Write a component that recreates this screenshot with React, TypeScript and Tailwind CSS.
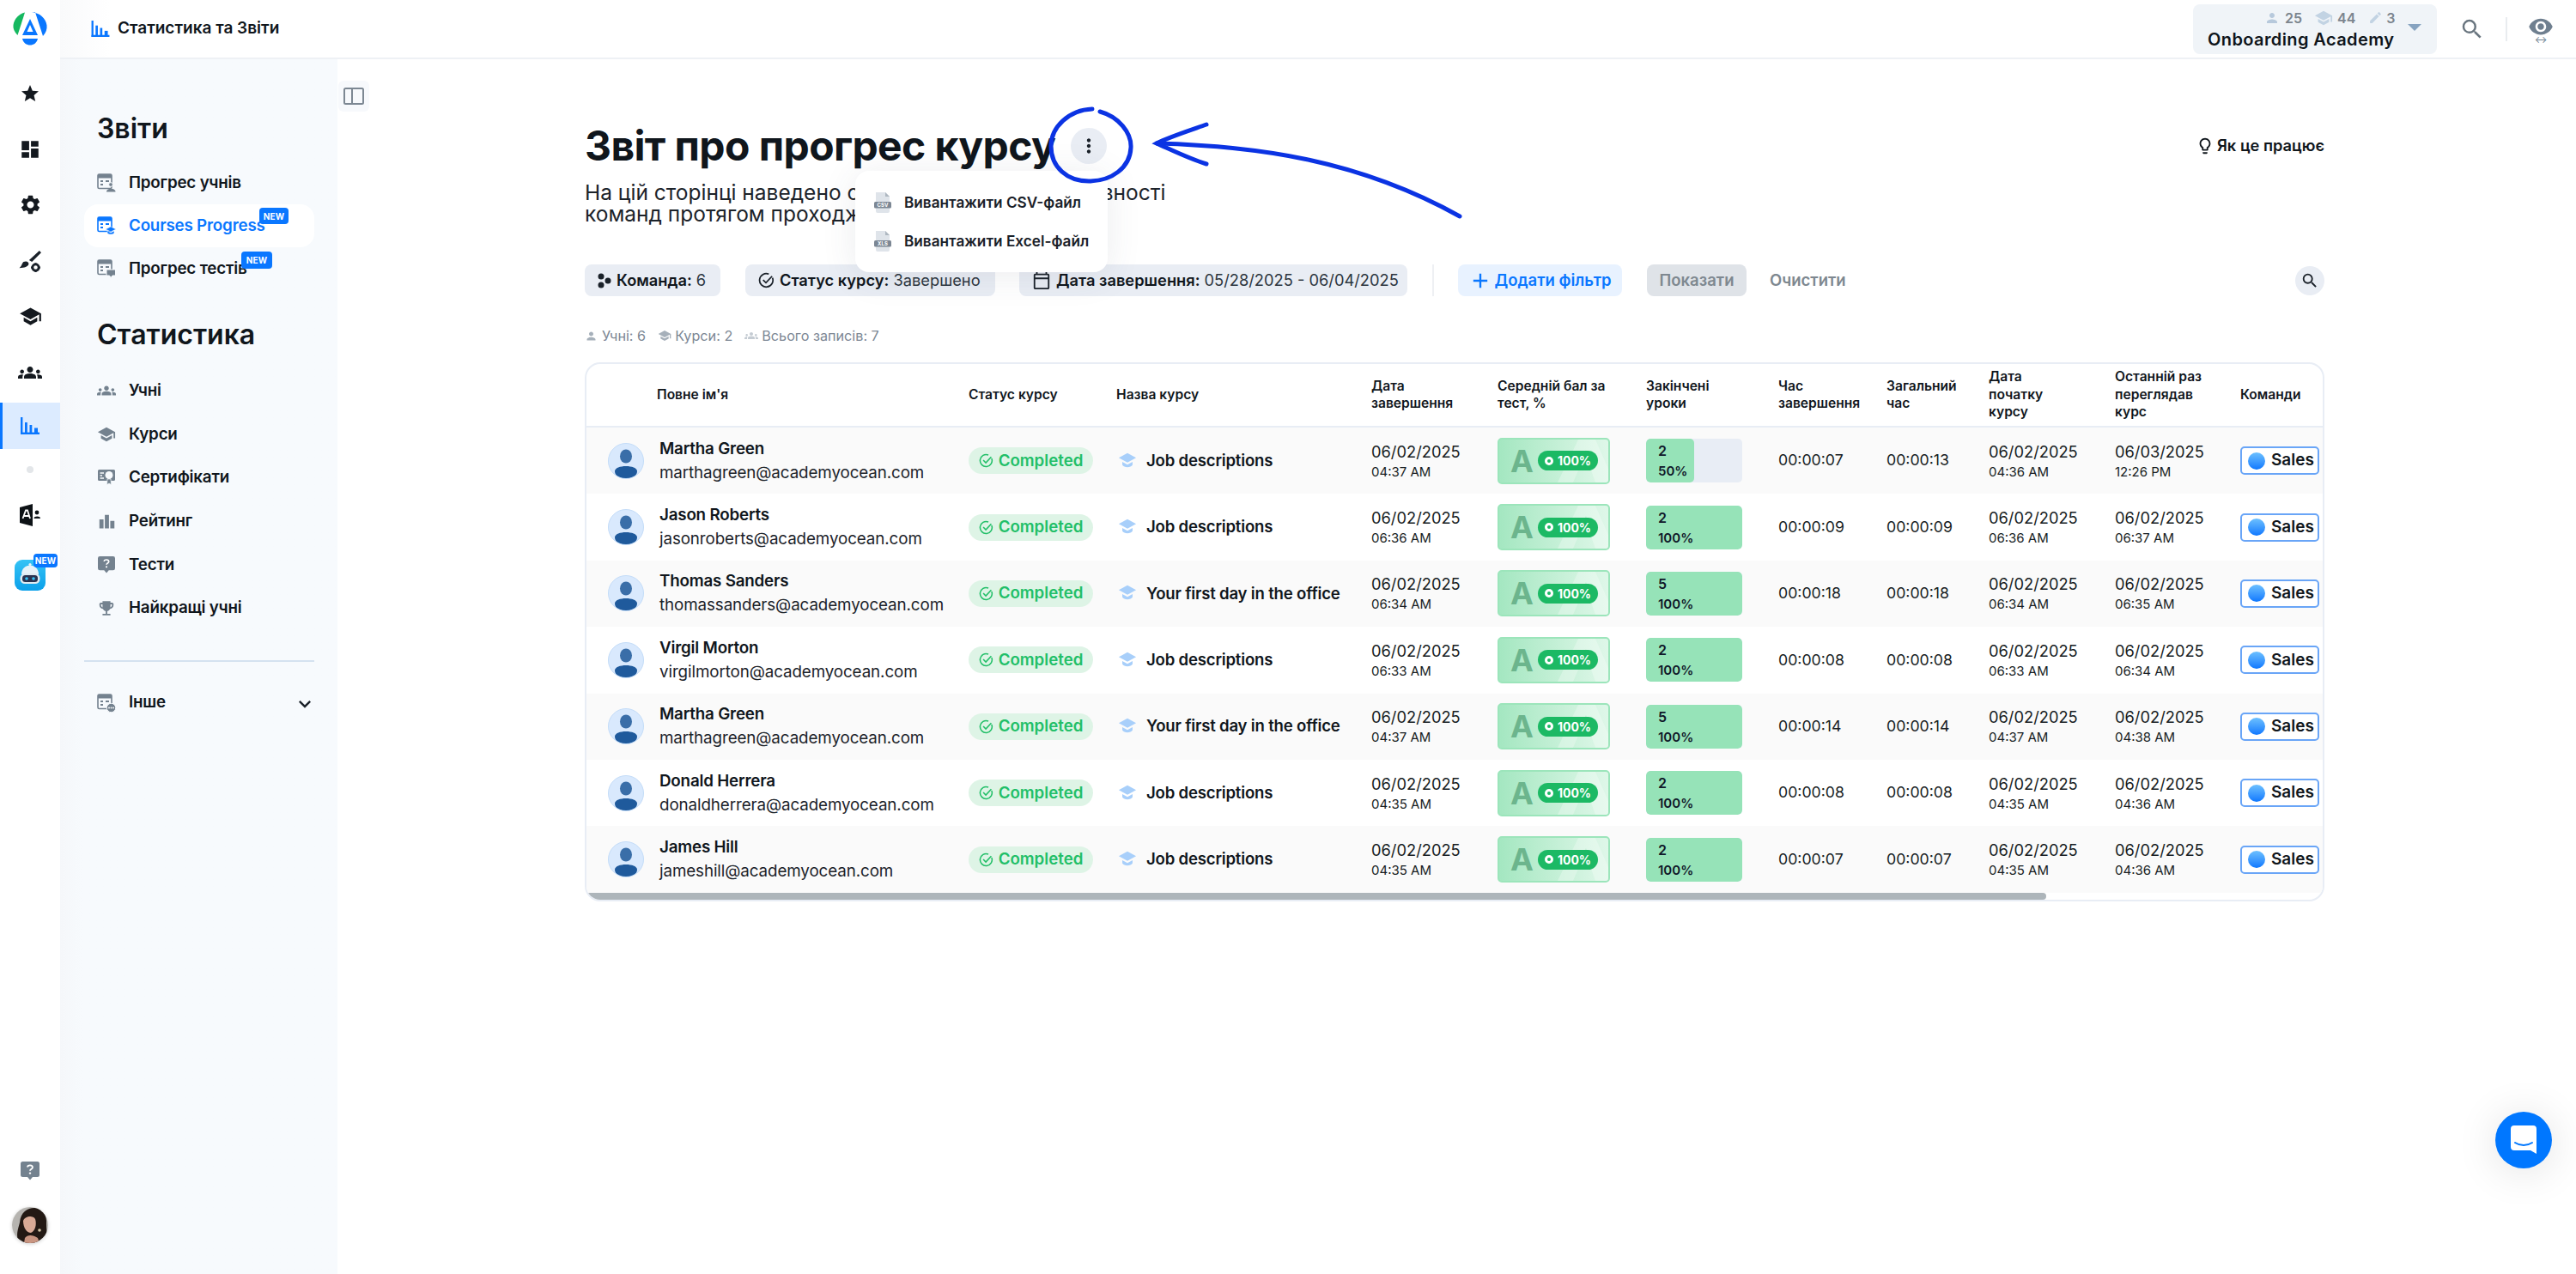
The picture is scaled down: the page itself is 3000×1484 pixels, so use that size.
import React from "react";
import { MdStar, MdDashboard, MdSettings, MdGroups, MdSchool, MdSearch, MdOutlineLightbulb, MdMoreVert, MdKeyboardArrowDown, MdOutlineCalendarToday, MdPerson, MdEdit, MdAdd, MdVisibility, MdEmojiEvents, MdLeaderboard } from "react-icons/md";

function ChartIcon({ className }: { className?: string }) {
  return (
    <svg viewBox="0 0 22 20" className={className} fill="currentColor">
      <rect x="0" y="0" width="2.4" height="20" />
      <rect x="0" y="17.6" width="22" height="2.4" />
      <rect x="5" y="6" width="2.8" height="12" />
      <rect x="10.5" y="9" width="2.8" height="9" />
      <rect x="16" y="12.5" width="4" height="6" />
    </svg>
  );
}

function Logo() {
  return (
    <svg viewBox="0 0 40 40" className="w-[40px] h-[40px]">
      <path d="M14 0.5 L5.5 27 C1.5 23 0 19 0.5 15 C1.5 8 7 2 14 0.5Z" fill="#16b860" />
      <path d="M22 0.2 C31 0.8 38.5 7 39.5 15.5 C40 20 38.5 24 35 28 L26 0.2Z" fill="#0a77ff" />
      <path d="M20 8 L29 27 L11 27Z M20 15 L16.5 23 L23.5 23Z" fill="#0a77ff" fillRule="evenodd" />
      <path d="M11 31 L29 31 C28 36 24 38.5 20 38.5 C16 38.5 12 36 11 31Z" fill="#0a77ff" />
    </svg>
  );
}

function BrushIcon() {
  return (
    <svg viewBox="0 0 24 24" className="w-[26px] h-[26px]" fill="#1a2129">
      <path d="M22 1 L24 3 L14 13 C13 12 12 11.500 11 11Z" />
      <path d="M5 13 C8 11.500 11 13 10.500 15.500 C10 18 6 19.500 0.500 19.500 C3 18 3 15 5 13Z" />
      <circle cx="18" cy="19" r="3.4" fill="none" stroke="#1a2129" strokeWidth="2.6" />
      <path d="M18 14 v2 M18 22 v2 M13 19 h2 M21 19 h2" stroke="#1a2129" strokeWidth="2" />
    </svg>
  );
}

function AcademyPeople() {
  return (
    <svg viewBox="0 0 24 26" className="w-[24px] h-[26px]">
      <path d="M0 4 L15 0 L15 26 L0 22Z" fill="#0d1216" />
      <path d="M3.500 17 L7 7.500 L9 7.500 L12 17 M5 14 L10.500 14" stroke="#fff" strokeWidth="1.800" fill="none" />
      <circle cx="20" cy="10" r="2.400" fill="#0d1216" />
      <path d="M16.500 17 C16.500 13.800 24 13.800 24 17Z" fill="#0d1216" />
    </svg>
  );
}

function BotIcon() {
  return (
    <svg viewBox="0 0 36 36" className="w-[36px] h-[36px]">
      <defs>
        <linearGradient id="botbg" x1="0" y1="0" x2="0" y2="1">
          <stop offset="0" stopColor="#35c3f5" />
          <stop offset="1" stopColor="#0ba0ea" />
        </linearGradient>
      </defs>
      <rect width="36" height="36" rx="9" fill="url(#botbg)" />
      <path d="M8 17 C8 10 13 6.500 18 6.500 C23 6.500 28 10 28 17Z" fill="#e6f2f8" />
      <circle cx="18" cy="5.500" r="1.600" fill="#e6f2f8" />
      <rect x="6.500" y="16" width="23" height="12" rx="5.500" fill="#dfeaf0" />
      <rect x="9" y="18" width="18" height="8" rx="3.500" fill="#2a3350" />
      <circle cx="14" cy="22" r="1.800" fill="#35c3f5" />
      <circle cx="22" cy="22" r="1.800" fill="#35c3f5" />
    </svg>
  );
}

function QuizIcon({ className }: { className?: string }) {
  return (
    <svg viewBox="0 0 22 22" className={className}>
      <path d="M2.500 0 H19.500 A2.500 2.500 0 0 1 22 2.500 V15.500 A2.500 2.500 0 0 1 19.500 18 H14 L11 21.500 L8 18 H2.500 A2.500 2.500 0 0 1 0 15.500 V2.500 A2.500 2.500 0 0 1 2.500 0Z" fill="#74828f" />
      <path d="M8 6.500 C8 3.600 14 3.600 14 6.800 C14 8.800 11 8.800 11 10.800" stroke="#fff" strokeWidth="1.800" fill="none" />
      <circle cx="11" cy="13.600" r="1.200" fill="#fff" />
    </svg>
  );
}

function ReportIcon({ color, kind }: { color: string; kind: "person" | "cap" | "quiz" | "more" }) {
  return (
    <svg viewBox="0 0 22 22" className="w-[22px] h-[22px]" fill="none">
      <rect x="1" y="1" width="16" height="16.500" rx="1.500" stroke={color} strokeWidth="1.600" />
      <rect x="1" y="1" width="16" height="4.500" fill={color} />
      <path d="M4 9 H7 M4 13 H7 M10 9 H14" stroke={color} strokeWidth="1.800" />
      {kind === "person" && (
        <g fill={color}>
          <circle cx="16" cy="13" r="2.400" stroke="#f7fafd" />
          <path d="M11 21.500 C11 16.500 21.500 16.500 21.500 21.500Z" />
        </g>
      )}
      {kind === "cap" && <path d="M16 12 L22 15 L16 18 L10 15Z M12 17 V19.500 C14 21.500 18 21.500 20 19.500 V17 L16 19Z" fill={color} stroke="#fff" strokeWidth=".5" />}
      {kind === "quiz" && <path d="M11 12 H21.500 V19 H18 L16 21.500 L14.500 19 H11Z" fill={color} stroke="#f7fafd" />}
      {kind === "more" && (
        <g>
          <circle cx="16.500" cy="16.500" r="5.200" fill={color} stroke="#f7fafd" />
          <circle cx="14" cy="16.500" r=".9" fill="#fff" />
          <circle cx="16.500" cy="16.500" r=".9" fill="#fff" />
          <circle cx="19" cy="16.500" r=".9" fill="#fff" />
        </g>
      )}
    </svg>
  );
}

function CertIcon() {
  return (
    <svg viewBox="0 0 20 18" className="w-[20px] h-[18px]">
      <path d="M1.500 0 H18.500 A1.500 1.500 0 0 1 20 1.500 V11.500 A1.500 1.500 0 0 1 18.500 13 H1.500 A1.500 1.500 0 0 1 0 11.500 V1.500 A1.500 1.500 0 0 1 1.500 0Z" fill="#74828f" />
      <path d="M2.500 4 H7 M2.500 7 H5 M2.500 10 H7" stroke="#f7fafd" strokeWidth="1.300" />
      <circle cx="13" cy="6.500" r="4.500" fill="#f7fafd" />
      <path d="M11 11 L10.500 17.500 L13 16 L15.500 17.500 L15 11Z" fill="#74828f" stroke="#f7fafd" strokeWidth=".7" />
    </svg>
  );
}

function NewBadge({ className }: { className: string }) {
  return <span className={`absolute flex items-center justify-center rounded-[4px] bg-[#0a77ff] text-white font-bold tracking-[0.2px] text-[10px] leading-none ${className}`}>NEW</span>;
}

function Rail() {
  const row = "flex h-[65px] w-full items-center justify-center text-[#14191f]";
  return (
    <aside className="flex w-[70px] shrink-0 flex-col items-center bg-white">
      <div className="flex h-[69px] w-full items-center justify-center pb-[1px]">
        <Logo />
      </div>
      <div className="flex w-full flex-col pt-[7px]">
        <div className={row}><MdStar className="h-[24px] w-[24px]" /></div>
        <div className={row}><MdDashboard className="h-[26px] w-[26px]" /></div>
        <div className={row}><MdSettings className="h-[27px] w-[27px]" /></div>
        <div className={row}><BrushIcon /></div>
        <div className={row}><MdSchool className="h-[27px] w-[27px]" /></div>
        <div className={row}><MdGroups className="h-[28px] w-[28px]" /></div>
      </div>
      <div className="mt-[3px] flex h-[54px] w-full items-center justify-center border-l-[3px] border-[#0a77ff] bg-[#dcebff] pr-[3px] text-[#0a77ff]">
        <ChartIcon className="h-[20px] w-[22px]" />
      </div>
      <div className="mt-[20px] h-[8px] w-[8px] rounded-full bg-[#e3e6e9]" />
      <div className="mt-[36px]"><AcademyPeople /></div>
      <div className="relative mt-[39px]">
        <BotIcon />
        <NewBadge className="left-[22px] top-[-7px] h-[16px] w-[28px] text-[8px]" />
      </div>
      <div className="mt-auto flex flex-col items-center pb-[36px]">
        <QuizIcon className="h-[22px] w-[22px]" />
        <div className="mt-[31px] h-[42px] w-[42px] overflow-hidden rounded-full shadow-[0_1px_4px_rgba(0,0,0,0.2)]">
          <svg viewBox="0 0 42 42" className="h-full w-full">
            <rect width="42" height="42" fill="#b6b4b0" />
            <path d="M8 42 C4 32 7 26 9 18 C10 6 18 1 26 1 C36 1 41 10 40 20 C40 28 42 32 38 42Z" fill="#231914" />
            <path d="M13 16 C15 11 24 9 27 14 C29 20 27 28 22 30 C17 30 13 24 13 16Z" fill="#d9aa96" />
            <path d="M15 36 C18 32 24 32 30 36 L32 42 L14 42Z" fill="#c99581" />
            <circle cx="32" cy="27" r="1.800" fill="#d8c8a8" />
          </svg>
        </div>
      </div>
    </aside>
  );
}

function TopBar() {
  return (
    <header className="flex h-[69px] shrink-0 items-center border-b-2 border-[#eef1f5] bg-gradient-to-r from-[#f9fafb] to-white to-[2%] pl-[36px] pr-[26px]">
      <ChartIcon className="h-[19px] w-[22px] text-[#0a77ff]" />
      <span className="ml-[9px] text-[19px] font-semibold text-[#10161c]">Статистика та Звіти</span>
      <div className="ml-auto flex h-[58px] w-[284px] flex-col rounded-[8px] bg-[#f0f4f8] pl-[17px] pt-[5px]">
        <div className="flex h-[22px] items-center pl-[66px] text-[16px] font-semibold text-[#7c858e]">
          <MdPerson className="h-[18px] w-[18px] text-[#b7c9dc]" />
          <span className="ml-[6px]">25</span>
          <MdSchool className="ml-[14px] h-[22px] w-[22px] text-[#c2d3e3]" />
          <span className="ml-[5px]">44</span>
          <MdEdit className="ml-[15px] h-[17px] w-[17px] text-[#c2d3e3]" />
          <span className="ml-[4px]">3</span>
        </div>
        <div className="relative flex items-center">
          <span className="text-[20px] leading-[28px] font-semibold tracking-[0.4px] text-[#0f151b]">Onboarding Academy</span>
          <span className="absolute left-[233px] top-[-4px] h-0 w-0 border-x-[8px] border-t-[8px] border-x-transparent border-t-[#86a3c0]" />
        </div>
      </div>
      <MdSearch className="ml-[26px] h-[30px] w-[30px] text-[#69757f]" />
      <div className="ml-[24px] h-[28px] w-[2px] bg-[#e9ecef]" />
      <div className="ml-[24px] flex flex-col items-center text-[#6f7f8f]">
        <MdVisibility className="h-[30px] w-[30px]" />
        <span className="mt-[-5px] text-[11px] leading-[10px]">↔</span>
      </div>
    </header>
  );
}

function SideItem({ icon, label, active, badge, tall }: { icon: React.ReactNode; label: string; active?: boolean; badge?: string; tall?: boolean }) {
  return (
    <div className={`relative flex ${tall ? "h-[50.600px]" : "h-[50px]"} w-[268px] items-center rounded-[16px] pl-[15px] ${active ? "bg-white text-[#0a77ff]" : "text-[#10161c]"}`}>
      <span className="flex w-[22px] items-center justify-center">{icon}</span>
      <span className="ml-[15px] text-[18.800px] font-semibold tracking-[-0.2px]">{label}</span>
      {badge && <NewBadge className={badge} />}
    </div>
  );
}

function Sidebar() {
  const gray = "#74828f";
  return (
    <nav className="flex w-[323px] shrink-0 flex-col bg-gradient-to-r from-[#f5f7fa] to-[#f7fafd] to-[8%] pl-[28px] pt-[59px]">
      <h2 className="pl-[15px] text-[32px] leading-[44px] font-semibold text-[#10161c]">Звіти</h2>
      <div className="mt-[16px] flex flex-col">
        <SideItem icon={<ReportIcon color={gray} kind="person" />} label="Прогрес учнів" />
        <SideItem icon={<ReportIcon color="#0a77ff" kind="cap" />} label="Courses Progress" active badge="left-[204px] top-[4px] h-[19px] w-[34px]" />
        <SideItem icon={<ReportIcon color={gray} kind="quiz" />} label="Прогрес тестів" badge="left-[183px] top-[5px] h-[20px] w-[36px]" />
      </div>
      <h2 className="mt-[30px] pl-[15px] text-[32px] leading-[44px] font-semibold text-[#10161c]">Статистика</h2>
      <div className="mt-[18px] flex flex-col">
        <SideItem tall icon={<MdGroups color={gray} className="h-[24px] w-[24px]" />} label="Учні" />
        <SideItem tall icon={<MdSchool color={gray} className="h-[24px] w-[24px]" />} label="Курси" />
        <SideItem tall icon={<CertIcon />} label="Сертифікати" />
        <SideItem tall icon={<MdLeaderboard color={gray} className="h-[21px] w-[21px]" />} label="Рейтинг" />
        <SideItem tall icon={<QuizIcon className="h-[20px] w-[20px]" />} label="Тести" />
        <SideItem tall icon={<MdEmojiEvents color={gray} className="h-[23px] w-[23px]" />} label="Найкращі учні" />
      </div>
      <div className="mt-[35px] h-[2px] w-[268px] bg-[#d5e2f0]" />
      <div className="relative mt-[23px]">
        <SideItem icon={<ReportIcon color={gray} kind="more" />} label="Інше" />
        <MdKeyboardArrowDown className="absolute left-[243px] top-[12px] h-[28px] w-[28px] text-[#1a2129]" />
      </div>
    </nav>
  );
}

function FileIcon({ label }: { label: string }) {
  return (
    <svg viewBox="0 0 20 24" className="h-[24px] w-[20px]">
      <path d="M2 0 H13 L18 5 V22 A2 2 0 0 1 16 24 H4 A2 2 0 0 1 2 22Z" fill="#dfe4ea" />
      <path d="M13 0 L18 5 H13Z" fill="#aeb7c0" />
      <rect x="0" y="11" width="20" height="7.500" rx="1.500" fill="#7c8794" />
      <text x="10" y="17" textAnchor="middle" fontSize="6" fontWeight="700" fill="#fff">{label}</text>
    </svg>
  );
}

function Chip({ icon, label, value, w }: { icon: React.ReactNode; label: string; value: string; w: string }) {
  return (
    <div className={`flex h-[37px] ${w} items-center rounded-[8px] bg-[#e9edf4] pl-[15px] text-[18.300px] whitespace-nowrap text-[#2d3640]`}>
      {icon}
      <span className="ml-[6px] font-semibold text-[#10161c]">{label}</span>
      <span className="ml-[5px]">{value}</span>
    </div>
  );
}

type R = { name: string; email: string; course: string; end: [string, string]; lessons: string; pct: number; time: string; total: string; start: [string, string]; last: [string, string] };

const rows: R[] = [
  { name: "Martha Green", email: "marthagreen@academyocean.com", course: "Job descriptions", end: ["06/02/2025", "04:37 AM"], lessons: "2", pct: 50, time: "00:00:07", total: "00:00:13", start: ["06/02/2025", "04:36 AM"], last: ["06/03/2025", "12:26 PM"] },
  { name: "Jason Roberts", email: "jasonroberts@academyocean.com", course: "Job descriptions", end: ["06/02/2025", "06:36 AM"], lessons: "2", pct: 100, time: "00:00:09", total: "00:00:09", start: ["06/02/2025", "06:36 AM"], last: ["06/02/2025", "06:37 AM"] },
  { name: "Thomas Sanders", email: "thomassanders@academyocean.com", course: "Your first day in the office", end: ["06/02/2025", "06:34 AM"], lessons: "5", pct: 100, time: "00:00:18", total: "00:00:18", start: ["06/02/2025", "06:34 AM"], last: ["06/02/2025", "06:35 AM"] },
  { name: "Virgil Morton", email: "virgilmorton@academyocean.com", course: "Job descriptions", end: ["06/02/2025", "06:33 AM"], lessons: "2", pct: 100, time: "00:00:08", total: "00:00:08", start: ["06/02/2025", "06:33 AM"], last: ["06/02/2025", "06:34 AM"] },
  { name: "Martha Green", email: "marthagreen@academyocean.com", course: "Your first day in the office", end: ["06/02/2025", "04:37 AM"], lessons: "5", pct: 100, time: "00:00:14", total: "00:00:14", start: ["06/02/2025", "04:37 AM"], last: ["06/02/2025", "04:38 AM"] },
  { name: "Donald Herrera", email: "donaldherrera@academyocean.com", course: "Job descriptions", end: ["06/02/2025", "04:35 AM"], lessons: "2", pct: 100, time: "00:00:08", total: "00:00:08", start: ["06/02/2025", "04:35 AM"], last: ["06/02/2025", "04:36 AM"] },
  { name: "James Hill", email: "jameshill@academyocean.com", course: "Job descriptions", end: ["06/02/2025", "04:35 AM"], lessons: "2", pct: 100, time: "00:00:07", total: "00:00:07", start: ["06/02/2025", "04:35 AM"], last: ["06/02/2025", "04:36 AM"] },
];

const gridCols = "grid grid-cols-[445px_172px_297px_147px_173px_154px_126px_119px_147px_146px_95px]";

function DateCell({ d }: { d: [string, string] }) {
  return (
    <div className="flex flex-col text-[#171d23]">
      <span className="text-[18.300px] leading-[26px]">{d[0]}</span>
      <span className="text-[15px] leading-[22px]">{d[1]}</span>
    </div>
  );
}

function Avatar() {
  return (
    <svg viewBox="0 0 42 42" className="h-[42px] w-[42px]">
      <defs>
        <clipPath id="avclip"><circle cx="21" cy="21" r="20" /></clipPath>
      </defs>
      <circle cx="21" cy="21" r="20.500" fill="#d9e9fd" stroke="#c3dcf8" />
      <g clipPath="url(#avclip)">
        <ellipse cx="21" cy="15.500" rx="7" ry="8" fill="#3a6ea8" />
        <path d="M8 33 C8 25 34 25 34 33 C34 38 28 42 21 42 C14 42 8 38 8 33Z" fill="#1f5a9c" />
      </g>
    </svg>
  );
}

function ScoreBadge() {
  return (
    <div className="relative flex h-[54px] w-[131px] items-center overflow-hidden rounded-[5px] border-2 border-[#9ce5bb] bg-gradient-to-r from-[#a4e7c1] to-[#dff7e9]">
      <svg viewBox="0 0 127 50" className="absolute inset-0 h-full w-full">
        <path d="M68 50 L92 0 H112 L127 34 V50 H112 L107 36 H92 L86 50Z" fill="#fff" fillOpacity="0.28" />
        <path d="M95 27 L101 12 L106 27Z" fill="#a4e7c1" fillOpacity="0.6" />
      </svg>
      <span className="relative ml-[13px] w-[32px] text-[36px] leading-none font-bold text-[#6cb58d]">A</span>
      <div className="relative flex h-[23px] w-[70px] items-center justify-center rounded-full bg-[#1cb964] text-[14px] font-bold text-white">
        <span className="mr-[5px] h-[10px] w-[10px] rounded-full border-[3px] border-white" />
        100%
      </div>
    </div>
  );
}

function Lessons({ n, pct }: { n: string; pct: number }) {
  return (
    <div className="relative h-[51px] w-[112px] overflow-hidden rounded-[5px] bg-[#e8edf5]">
      <div className="absolute inset-y-0 left-0 rounded-[5px] bg-[#96e3b8]" style={{ width: `${pct}%` }} />
      <div className="relative flex flex-col pl-[14px] pt-[2px] font-semibold text-[#10182a]">
        <span className="text-[16px] leading-[24px]">{n}</span>
        <span className="text-[15px] leading-[24px]">{pct}%</span>
      </div>
    </div>
  );
}

function Row({ r, i }: { r: R; i: number }) {
  return (
    <div className={`${gridCols} h-[77.400px] items-center ${i % 2 === 0 ? "bg-[#fafafa]" : "bg-white"}`}>
      <div className="flex items-center pl-[25px]">
        <Avatar />
        <div className="ml-[18px] flex flex-col">
          <span className="text-[18.800px] leading-[28px] font-semibold tracking-[-0.2px] text-[#10161c]">{r.name}</span>
          <span className="text-[18.800px] leading-[28px] tracking-[-0.1px] text-[#1c232a]">{r.email}</span>
        </div>
      </div>
      <div>
        <div className="flex h-[31px] w-[145px] items-center justify-center rounded-full bg-[#def4e6] text-[18.700px] font-semibold text-[#22bf68]">
          <svg viewBox="0 0 20 20" className="mr-[6px] h-[17px] w-[17px]" fill="none" stroke="#22bf68" strokeWidth="1.800">
            <path d="M17.500 7 A8.200 8.200 0 1 1 13 2.400" />
            <path d="M6 9.500 L9.500 13 L17 5" />
          </svg>
          Completed
        </div>
      </div>
      <div className="flex items-center">
        <svg viewBox="0 0 24 24" className="ml-[2px] h-[22px] w-[22px]" fill="#a8cffa">
          <path d="M12 2 L23 8 L12 14 L1 8Z" />
          <path d="M5.500 13 V17 C8 21 16 21 18.500 17 V13 L12 16.500Z" />
        </svg>
        <span className="ml-[11px] text-[18.600px] font-semibold tracking-[-0.2px] whitespace-nowrap text-[#10161c]">{r.course}</span>
      </div>
      <DateCell d={r.end} />
      <ScoreBadge />
      <Lessons n={r.lessons} pct={r.pct} />
      <span className="text-[17.700px] text-[#171d23]">{r.time}</span>
      <span className="text-[17.700px] text-[#171d23]">{r.total}</span>
      <DateCell d={r.start} />
      <DateCell d={r.last} />
      <div className="flex h-[33px] w-[92px] items-center rounded-[5px] border-2 border-[#69a5f7] bg-white pl-[7px] text-[19px] font-semibold text-[#10161c]">
        <span className="h-[20px] w-[20px] rounded-full bg-gradient-to-b from-[#6cc0ff] to-[#0a77ff]" />
        <span className="ml-[7px]">Sales</span>
      </div>
    </div>
  );
}

function Table() {
  const th = "text-[15.600px] leading-[20.500px] font-semibold text-[#10161c]";
  return (
    <div className="mt-[21px] h-[628px] w-[2026px] overflow-hidden rounded-[18px] border-2 border-[#e8edf5] bg-white">
      <div className={`${gridCols} h-[74px] items-center border-b-2 border-[#e8edf5]`}>
        <span className={`${th} pl-[82px]`}>Повне ім'я</span>
        <span className={th}>Статус курсу</span>
        <span className={th}>Назва курсу</span>
        <span className={th}>Дата<br />завершення</span>
        <span className={th}>Середній бал за<br />тест, %</span>
        <span className={th}>Закінчені<br />уроки</span>
        <span className={th}>Час<br />завершення</span>
        <span className={th}>Загальний<br />час</span>
        <span className={th}>Дата<br />початку<br />курсу</span>
        <span className={th}>Останній раз<br />переглядав<br />курс</span>
        <span className={th}>Команди</span>
      </div>
      {rows.map((r, i) => <Row key={i} r={r} i={i} />)}
      <div className="h-[8px] w-[1700px] rounded-full bg-[#adb5ba]" />
    </div>
  );
}

function TeamIcon() {
  return (
    <svg viewBox="0 0 16 18" className="h-[18px] w-[16px]" fill="#1a2129">
      <circle cx="4" cy="4" r="3.500" />
      <circle cx="4" cy="14" r="3.500" />
      <circle cx="12" cy="9" r="3.500" />
    </svg>
  );
}

function Main() {
  return (
    <main className="flex flex-1 bg-white">
      <div className="w-[288px] shrink-0 pl-[1px] pt-[25px]">
        <div className="flex h-[36px] w-[36px] items-center justify-center rounded-[6px] bg-[#f7f9fc]">
          <svg viewBox="0 0 24 20" className="h-[20px] w-[24px]" fill="none" stroke="#7d8893" strokeWidth="2">
            <rect x="1" y="1" width="22" height="18" rx="1.500" />
            <path d="M10 1 V19" />
          </svg>
        </div>
      </div>
      <div className="w-[2026px] pt-[73px]">
        <div className="relative flex h-[56px] items-center">
          <h1 className="text-[48px] leading-[56px] font-bold tracking-[-0.6px] whitespace-nowrap text-[#10161c]">Звіт про прогрес курсу</h1>
          <div className="absolute left-[566px] top-[7px] flex h-[42px] w-[42px] items-center justify-center rounded-full bg-[#e9edf4] text-[#1a2129]">
            <MdMoreVert className="h-[26px] w-[26px]" />
          </div>
          <div className="absolute left-[315px] top-[57px] z-10 flex h-[118px] w-[294px] flex-col justify-center gap-[21px] rounded-[16px] bg-white pl-[22px] shadow-[0_4px_40px_rgba(60,70,90,0.10)]">
            <div className="flex h-[24px] items-center gap-[15px] text-[17.200px] font-semibold text-[#1a2129]"><FileIcon label="CSV" />Вивантажити CSV-файл</div>
            <div className="flex h-[24px] items-center gap-[15px] text-[17.200px] font-semibold text-[#1a2129]"><FileIcon label="XLS" />Вивантажити Excel-файл</div>
          </div>
          <div className="ml-auto flex items-center text-[18.300px] font-semibold text-[#10161c]">
            <MdOutlineLightbulb className="mr-[3px] h-[22px] w-[22px]" />
            Як це працює
          </div>
        </div>
        <p className="mt-[14px] text-[24.500px] leading-[25px] text-[#1c232a]">
          На цій сторінці наведено огляд успішності та активності<br />команд протягом проходження курсу
        </p>
        <div className="mt-[46px] flex h-[37px] items-center">
          <Chip w="w-[158px]" icon={<TeamIcon />} label="Команда:" value="6" />
          <div className="ml-[29px]">
            <Chip w="w-[291px]" icon={<svg viewBox="0 0 20 20" className="h-[19px] w-[19px]" fill="none" stroke="#1a2129" strokeWidth="1.800"><path d="M17.500 7 A8.200 8.200 0 1 1 13 2.400" /><path d="M6 9.500 L9.500 13 L17 5" /></svg>} label="Статус курсу:" value="Завершено" />
          </div>
          <div className="ml-[28px]">
            <Chip w="w-[452px]" icon={<MdOutlineCalendarToday className="h-[22px] w-[22px] text-[#1a2129]" />} label="Дата завершення:" value="05/28/2025 - 06/04/2025" />
          </div>
          <div className="ml-[29px] h-[37px] w-[2px] bg-[#eef0f3]" />
          <div className="ml-[28px] flex h-[37px] w-[191px] items-center justify-center rounded-[8px] bg-[#e8f2ff] text-[18.500px] font-semibold text-[#0a77ff]">
            <MdAdd className="mr-[2px] h-[28px] w-[28px]" />
            Додати фільтр
          </div>
          <div className="ml-[29px] flex h-[37px] w-[116px] items-center justify-center rounded-[8px] bg-[#dfe3e8] text-[18.500px] font-semibold text-[#7e8890]">Показати</div>
          <div className="ml-[27px] text-[18.500px] font-semibold text-[#7e8890]">Очистити</div>
          <div className="ml-auto flex h-[34px] w-[34px] items-center justify-center rounded-full bg-[#e9edf4] text-[#1a2129]">
            <MdSearch className="h-[22px] w-[22px]" />
          </div>
        </div>
        <div className="mt-[36px] flex h-[20px] items-center text-[16.200px] text-[#7c8794]">
          <MdPerson className="h-[15px] w-[15px] text-[#a6b0ba]" />
          <span className="ml-[5px]">Учні: 6</span>
          <MdSchool className="ml-[14px] h-[16px] w-[16px] text-[#a6b0ba]" />
          <span className="ml-[4px]">Курси: 2</span>
          <MdGroups className="ml-[14px] h-[16px] w-[16px] text-[#c5ccd3]" />
          <span className="ml-[4px]">Всього записів: 7</span>
        </div>
        <Table />
      </div>
    </main>
  );
}

export default function App() {
  return (
    <div className="relative flex h-[1484px] w-[3000px] overflow-hidden bg-white [font-family:Inter,sans-serif]">
      <Rail />
      <div className="flex flex-1 flex-col">
        <TopBar />
        <div className="flex flex-1">
          <Sidebar />
          <Main />
        </div>
      </div>
      <svg viewBox="0 0 3000 1484" className="pointer-events-none absolute inset-0 z-20 h-full w-full" fill="none" stroke="#0b33e3" strokeWidth="5" strokeLinecap="round">
        <path d="M1281 130 C1303 136 1318 155 1317 172 C1316 195 1295 211 1268 211 C1243 211 1224 195 1224 170 C1224 148 1245 128 1272 127" />
        <path d="M1347 167 C1460 170 1580 185 1700 252" />
        <path d="M1405 145 C1385 152 1360 160 1347 167 C1365 175 1385 185 1405 191" />
      </svg>
      <div className="absolute left-[2906px] top-[1295px] z-20 flex h-[66px] w-[66px] items-center justify-center rounded-full bg-[#0077ff] shadow-[0_4px_50px_rgba(0,0,0,0.12)]">
        <svg viewBox="0 0 30 34" className="h-[34px] w-[30px]">
          <path d="M4 0 H26 A4 4 0 0 1 30 4 V33 L23 29 H4 A4 4 0 0 1 0 25 V4 A4 4 0 0 1 4 0Z" fill="#fff" />
          <path d="M5 20 C11 24 19 24 25 20" stroke="#0077ff" strokeWidth="2" fill="none" strokeLinecap="round" />
        </svg>
      </div>
    </div>
  );
}
